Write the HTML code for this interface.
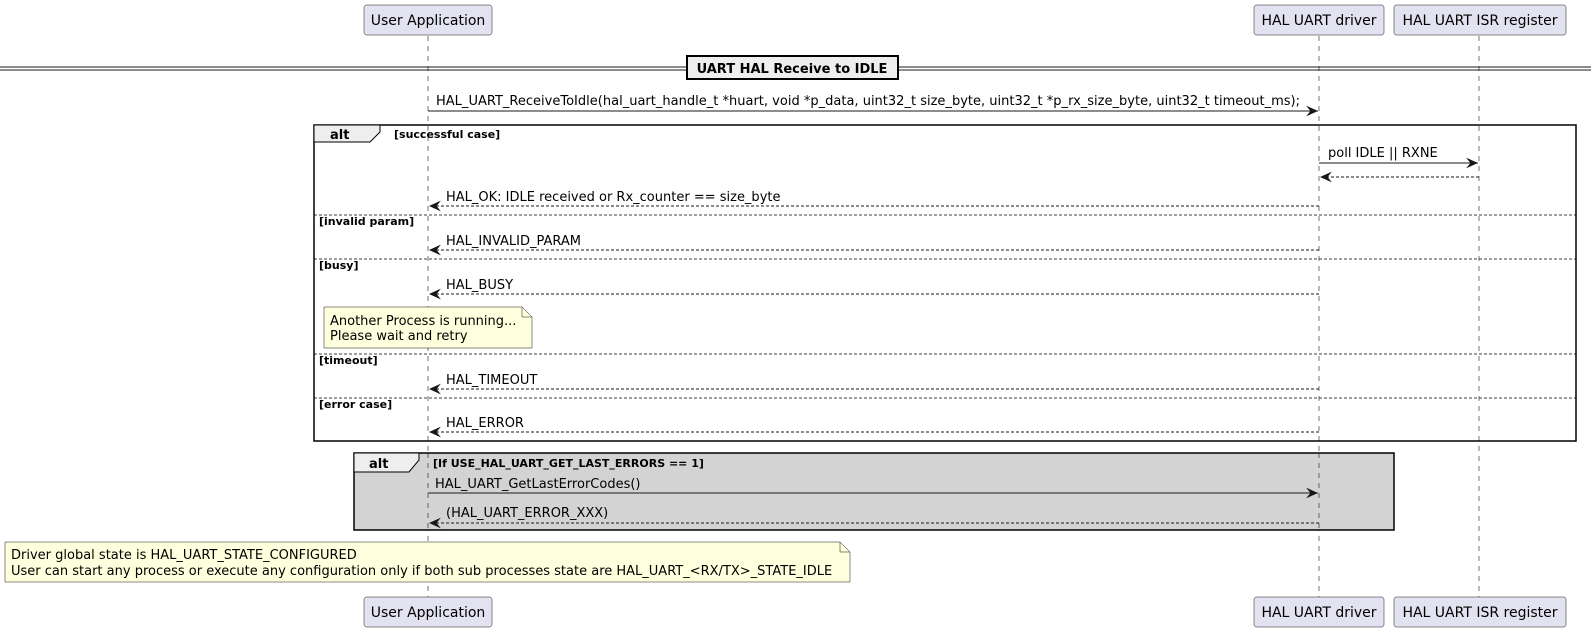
<!DOCTYPE html>
<html><head><meta charset="utf-8"><style>
html,body{margin:0;padding:0;background:#fff;}
svg{display:block;font-family:"DejaVu Sans","Liberation Sans",sans-serif;}
</style></head><body>
<svg width="1591" height="631" viewBox="0 0 1591 631" xmlns="http://www.w3.org/2000/svg">
<defs>
<marker id="a" viewBox="0 0 12 10" refX="11" refY="5" markerWidth="13" markerHeight="11" markerUnits="userSpaceOnUse" orient="auto"><path d="M0,0 L11,5 L0,10 L4,5 Z" fill="#181818"/></marker>
</defs>
<g stroke="#181818" stroke-width="0.6" stroke-dasharray="5,5">
<line x1="428" y1="36" x2="428" y2="597"/>
<line x1="1319" y1="36" x2="1319" y2="597"/>
<line x1="1479" y1="36" x2="1479" y2="597"/>
</g>
<g fill="#E2E2F0" stroke="#181818" stroke-width="0.5">
<rect x="364" y="5" width="128" height="30" rx="2.5"/>
<rect x="1254" y="5" width="130" height="30" rx="2.5"/>
<rect x="1394" y="5" width="172" height="30" rx="2.5"/>
<rect x="364" y="597" width="128" height="30" rx="2.5"/>
<rect x="1254" y="597" width="130" height="30" rx="2.5"/>
<rect x="1394" y="597" width="172" height="30" rx="2.5"/>
</g>
<g font-size="14" fill="#000" text-anchor="middle">
<text x="428" y="25">User Application</text>
<text x="1319" y="25">HAL UART driver</text>
<text x="1480" y="25">HAL UART ISR register</text>
<text x="428" y="617">User Application</text>
<text x="1319" y="617">HAL UART driver</text>
<text x="1480" y="617">HAL UART ISR register</text>
</g>
<line x1="0" y1="67" x2="1591" y2="67" stroke="#181818" stroke-width="1"/>
<line x1="0" y1="70" x2="1591" y2="70" stroke="#181818" stroke-width="1"/>
<rect x="687" y="56" width="211" height="23" fill="#EEEEEE" stroke="#000" stroke-width="2"/>
<text x="792" y="73" font-size="13" font-weight="bold" text-anchor="middle">UART HAL Receive to IDLE</text>
<text x="436" y="105" font-size="13" textLength="864" lengthAdjust="spacingAndGlyphs">HAL_UART_ReceiveToIdle(hal_uart_handle_t *huart, void *p_data, uint32_t size_byte, uint32_t *p_rx_size_byte, uint32_t timeout_ms);</text>
<line x1="428" y1="111" x2="1318" y2="111" stroke="#181818" marker-end="url(#a)"/>
<rect x="314" y="125" width="1262" height="316" fill="none" stroke="#000" stroke-width="1.5"/>
<path d="M314,125 L380,125 L380,132 L370,142 L314,142 Z" fill="#EEEEEE" stroke="#000" stroke-width="1"/>
<text x="330" y="139" font-size="13" font-weight="bold">alt</text>
<g font-size="11" font-weight="bold">
<text x="394" y="138">[successful case]</text>
<text x="319" y="225">[invalid param]</text>
<text x="319" y="269">[busy]</text>
<text x="319" y="364">[timeout]</text>
<text x="319" y="408">[error case]</text>
</g>
<g stroke="#000" stroke-width="0.7" stroke-dasharray="3,2">
<line x1="314" y1="215" x2="1576" y2="215"/>
<line x1="314" y1="259" x2="1576" y2="259"/>
<line x1="314" y1="354" x2="1576" y2="354"/>
<line x1="314" y1="398" x2="1576" y2="398"/>
</g>
<text x="1328" y="157" font-size="13">poll IDLE || RXNE</text>
<line x1="1319" y1="163" x2="1478" y2="163" stroke="#181818" marker-end="url(#a)"/>
<g stroke="#181818" stroke-dasharray="3,2">
<line x1="1479" y1="177" x2="1320" y2="177" marker-end="url(#a)"/>
<line x1="1319" y1="206" x2="429" y2="206" marker-end="url(#a)"/>
<line x1="1319" y1="250" x2="429" y2="250" marker-end="url(#a)"/>
<line x1="1319" y1="294" x2="429" y2="294" marker-end="url(#a)"/>
<line x1="1319" y1="389" x2="429" y2="389" marker-end="url(#a)"/>
<line x1="1319" y1="432" x2="429" y2="432" marker-end="url(#a)"/>
</g>
<g font-size="13">
<text x="446" y="201">HAL_OK: IDLE received or Rx_counter == size_byte</text>
<text x="446" y="245">HAL_INVALID_PARAM</text>
<text x="446" y="289">HAL_BUSY</text>
<text x="446" y="384">HAL_TIMEOUT</text>
<text x="446" y="427">HAL_ERROR</text>
</g>
<path d="M324,307 L522,307 L532,317 L532,348 L324,348 Z" fill="#FEFFDD" stroke="#181818" stroke-width="0.5"/>
<path d="M522,307 L522,317 L532,317" fill="none" stroke="#181818" stroke-width="0.5"/>
<text x="330" y="325" font-size="13">Another Process is running...</text>
<text x="330" y="340" font-size="13">Please wait and retry</text>
<rect x="354" y="453" width="1040" height="77" fill="#D3D3D3" stroke="#000" stroke-width="1.5"/>
<path d="M354,453 L419,453 L419,460 L409,472 L354,472 Z" fill="#EEEEEE" stroke="#000" stroke-width="1"/>
<text x="369" y="468" font-size="13" font-weight="bold">alt</text>
<text x="433" y="467" font-size="11" font-weight="bold">[If USE_HAL_UART_GET_LAST_ERRORS == 1]</text>
<line x1="428" y1="453" x2="428" y2="530" stroke="#181818" stroke-width="0.6" stroke-dasharray="5,5"/>
<line x1="1319" y1="453" x2="1319" y2="530" stroke="#181818" stroke-width="0.6" stroke-dasharray="5,5"/>
<text x="435" y="488" font-size="13">HAL_UART_GetLastErrorCodes()</text>
<line x1="428" y1="493" x2="1318" y2="493" stroke="#181818" marker-end="url(#a)"/>
<text x="446" y="517" font-size="13">(HAL_UART_ERROR_XXX)</text>
<line x1="1319" y1="523" x2="429" y2="523" stroke="#181818" stroke-dasharray="3,2" marker-end="url(#a)"/>
<path d="M5,542 L840,542 L850,552 L850,582 L5,582 Z" fill="#FEFFDD" stroke="#181818" stroke-width="0.5"/>
<path d="M840,542 L840,552 L850,552" fill="none" stroke="#181818" stroke-width="0.5"/>
<text x="11" y="559" font-size="13">Driver global state is HAL_UART_STATE_CONFIGURED</text>
<text x="11" y="575" font-size="13">User can start any process or execute any configuration only if both sub processes state are HAL_UART_&lt;RX/TX&gt;_STATE_IDLE</text>
</svg>
</body></html>
